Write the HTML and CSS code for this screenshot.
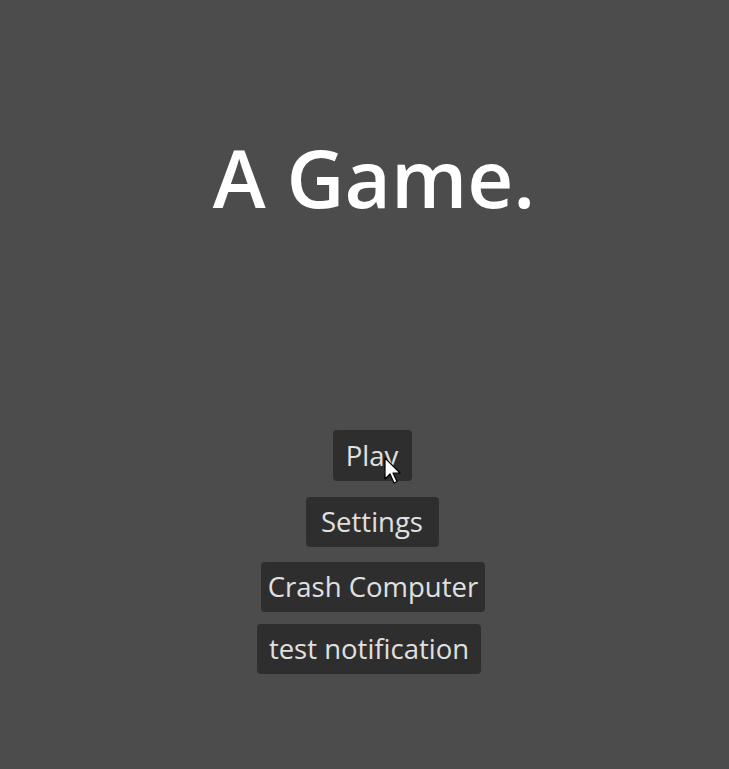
FILE: index.html
```html
<!DOCTYPE html>
<html>
<head>
<meta charset="utf-8">
<link rel="stylesheet" href="styles.css">
</head>
<body>
<main class="screen">
  <h1 class="title">A Game.</h1>
  <nav class="menu">
    <button class="btn btn-play">Play</button>
    <button class="btn btn-settings">Settings</button>
    <button class="btn btn-crash">Crash Computer</button>
    <button class="btn btn-test">test notification</button>
  </nav>
  <svg class="cursor" width="18" height="28" viewBox="0 0 18 28">
    <path d="M1 1 L1 22 L6 17 L10 26 L13 24.5 L9 16 L16 16 Z" fill="#fff" stroke="#000" stroke-width="1.2" stroke-linejoin="round"/>
  </svg>
</main>
</body>
</html>
```
FILE: styles.css
```css
html, body {
  margin: 0;
  padding: 0;
  background: #4c4c4c;
}
.screen {
  position: relative;
  width: 729px;
  height: 769px;
  display: flex;
  flex-direction: column;
  align-items: center;
  padding-left: 15px;
  box-sizing: border-box;
  font-family: "Open Sans", sans-serif;
}
.title {
  margin: 137px 0 0 4px;
  font-size: 80px;
  line-height: 1;
  font-weight: 600;
  color: #ffffff;
}
.menu {
  margin-top: 213px;
  display: flex;
  flex-direction: column;
  align-items: center;
}
.btn {
  font-family: "Open Sans", sans-serif;
  font-size: 27.5px;
  font-weight: 500;
  color: #e0e0e0;
  background: #2e2e2e;
  border: none;
  border-radius: 4px;
  height: 50px;
  padding: 0;
  margin: 0;
  line-height: 1;
  text-align: center;
}
.btn-play { width: 79px; height: 51px; }
.btn-settings { width: 133px; margin-top: 16px; }
.btn-crash { width: 224px; margin-top: 15px; margin-left: 2px; }
.btn-test { width: 224px; margin-top: 12px; margin-right: 6px; }
.cursor {
  position: absolute;
  left: 384px;
  top: 457px;
}
```
